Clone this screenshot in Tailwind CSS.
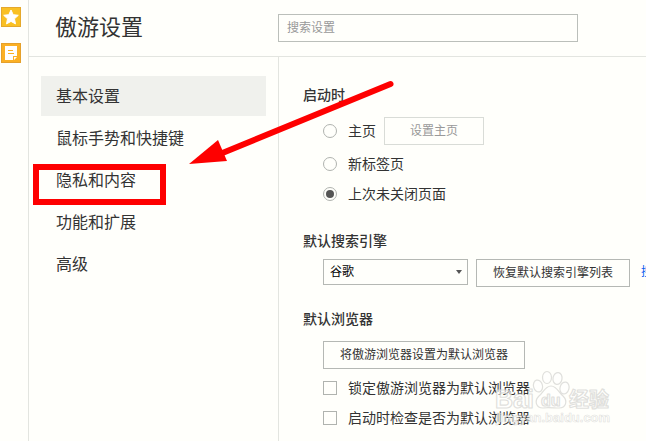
<!DOCTYPE html>
<html lang="zh-CN">
    <head>
        <meta charset="UTF-8" />
        <meta name="viewport" content="width=device-width, initial-scale=1.0" />
        <title>傲游设置</title>
        <script src="https://cdn.jsdelivr.net/npm/@tailwindcss/browser@4"></script>
    </head>
    <body class="relative flex min-h-screen overflow-hidden bg-[#fffffb] font-['Liberation_Sans','Noto_Sans_CJK_SC',sans-serif] text-sm text-[#333]">
        <!-- left toolbar -->
        <aside class="flex w-[29px] shrink-0 flex-col gap-4 border-r border-[#e3e5e0] pt-[7px] pl-px">
            <button aria-label="收藏" class="size-5">
                <svg viewBox="0 0 20 20" class="size-5">
                    <rect x=".5" y=".5" width="19" height="19" fill="#f9c023" stroke="#e5a82b" />
                    <path d="M10 3l2.200 4.700 5.100.6-3.800 3.500 1 5.100L10 14.400l-4.500 2.500 1-5.100-3.800-3.500 5.100-.6z" fill="#fff" stroke="#fff" stroke-linejoin="round" />
                </svg>
            </button>
            <button aria-label="记事本" class="size-5">
                <svg viewBox="0 0 20 20" class="size-5">
                    <rect x=".5" y=".5" width="19" height="19" fill="#fbb024" stroke="#e5a02b" />
                    <path d="M4 3h12v10h-4v4H4zM13 14h3l-3 3z" fill="#fff" />
                    <path d="M7 7.500h5M7 10.500h6" stroke="#fbb024" />
                </svg>
            </button>
        </aside>

        <div class="flex min-w-0 flex-1 flex-col">
            <!-- header -->
            <header class="flex h-[57px] items-center border-b border-[#e3e5e0]">
                <h1 class="w-[249px] shrink-0 pl-[26px] text-[22px] leading-7">傲游设置</h1>
                <input type="text" aria-label="搜索设置" placeholder="搜索设置" class="h-7 w-[300px] border border-[#bbbfba] px-2 text-xs placeholder:text-[#999]" />
            </header>

            <div class="flex flex-1">
                <!-- menu -->
                <nav class="flex w-[250px] shrink-0 flex-col gap-0.5 border-r border-[#e3e5e0] px-3 pt-[19px] text-base">
                    <a href="#" class="flex h-10 items-center bg-[#f0f1ed] pt-0.5 pl-[15px]">基本设置</a>
                    <a href="#" class="flex h-10 items-center pt-0.5 pl-[15px]">鼠标手势和快捷键</a>
                    <a href="#" class="flex h-10 items-center pt-0.5 pl-[15px]">隐私和内容</a>
                    <a href="#" class="flex h-10 items-center pt-0.5 pl-[15px]">功能和扩展</a>
                    <a href="#" class="flex h-10 items-center pt-0.5 pl-[15px]">高级</a>
                </nav>

                <!-- settings -->
                <main class="min-w-0 flex-1 overflow-hidden pt-7 pl-6 whitespace-nowrap">
                    <section>
                        <h2 class="leading-5 font-medium">启动时</h2>
                        <div class="mt-3 ml-5 flex h-7 items-center">
                            <input type="radio" name="startup" id="startup-home" class="size-3.5 appearance-none rounded-full border border-[#b0b3af]" />
                            <label for="startup-home" class="ml-[11px]">主页</label>
                            <button disabled class="ml-2 h-7 w-[100px] border border-[#d9dcd7] text-xs text-[#999]">设置主页</button>
                        </div>
                        <div class="mt-[9px] ml-5 flex h-5 items-center">
                            <input type="radio" name="startup" id="startup-new" class="size-3.5 appearance-none rounded-full border border-[#b0b3af]" />
                            <label for="startup-new" class="ml-[11px]">新标签页</label>
                        </div>
                        <div class="mt-2.5 ml-5 flex h-5 items-center">
                            <input type="radio" name="startup" id="startup-last" checked class="size-3.5 appearance-none rounded-full border border-[#b0b3af] checked:bg-[#555] checked:bg-clip-content checked:p-0.5" />
                            <label for="startup-last" class="ml-[11px]">上次未关闭页面</label>
                        </div>
                    </section>

                    <section class="mt-[27px]">
                        <h2 class="leading-5 font-medium">默认搜索引擎</h2>
                        <div class="mt-2 ml-5 flex h-7 items-start text-xs">
                            <div class="relative w-[145px] shrink-0">
                                <select aria-label="默认搜索引擎" class="h-[26px] w-full appearance-none border border-[#b5b8b4] pl-1.5 text-black">
                                    <option>谷歌</option>
                                </select>
                                <svg viewBox="0 0 6 4" class="pointer-events-none absolute top-[11px] right-[6px] h-1 w-1.5"><path d="M0 0h6L3 4z" fill="#555" /></svg>
                            </div>
                            <button class="ml-2 h-7 w-[154px] shrink-0 border border-[#b5b8b4]">恢复默认搜索引擎列表</button>
                            <a href="#" class="ml-[11px] leading-[26px] text-[#0a5cf0]">搜索引擎管理</a>
                        </div>
                    </section>

                    <section class="mt-[22px]">
                        <h2 class="leading-5 font-medium">默认浏览器</h2>
                        <button class="mt-3 ml-5 block h-7 w-[202px] border border-[#b5b8b4] text-xs">将傲游浏览器设置为默认浏览器</button>
                        <div class="mt-[9px] ml-5 flex h-5 items-center">
                            <input type="checkbox" id="lock-default" class="size-3.5 appearance-none border border-[#b0b3af]" />
                            <label for="lock-default" class="ml-[11px]">锁定傲游浏览器为默认浏览器</label>
                        </div>
                        <div class="mt-2.5 ml-5 flex h-5 items-center">
                            <input type="checkbox" id="check-default" class="size-3.5 appearance-none border border-[#b0b3af]" />
                            <label for="check-default" class="ml-[11px]">启动时检查是否为默认浏览器</label>
                        </div>
                    </section>
                </main>
            </div>
        </div>

        <!-- highlight box -->
        <div class="pointer-events-none absolute top-[164px] left-[33px] h-[41px] w-[133px] border-6 border-[#fe0000]"></div>
        <!-- arrow -->
        <svg viewBox="0 0 210 90" class="pointer-events-none absolute top-[78px] left-[186px] h-[90px] w-[210px]">
            <path d="M34 76L204.500 6" stroke="#fe0000" stroke-width="6" stroke-linecap="round" />
            <path d="M3 86L32 62 41 83z" fill="#fe0000" />
        </svg>
        <!-- watermark -->
        <svg viewBox="0 0 120 60" class="pointer-events-none absolute top-[368px] left-[493px] h-[60px] w-[120px]">
            <g fill="#fff" fill-opacity=".5" stroke="#d8d8d5" stroke-opacity=".8" stroke-width="1.200" stroke-linejoin="round">
                <ellipse cx="45" cy="18" rx="4.500" ry="6" transform="rotate(-15 45 18)" />
                <ellipse cx="54" cy="9.500" rx="4.500" ry="6" />
                <ellipse cx="64.500" cy="10.500" rx="4.500" ry="6" transform="rotate(10 64.500 10.500)" />
                <ellipse cx="71.500" cy="20" rx="4.500" ry="6" transform="rotate(15 71.500 20)" />
                <path d="M58 18c6 0 8 7 12 10 5 5 3 12-4 12-5 0-11-1-16 0-7 0-9-7-4-12 4-3 6-10 12-10z" />
                <text x="2" y="40" font-family="Liberation Sans" font-weight="700" font-size="25">Bai</text>
                <text x="48" y="38" font-family="Liberation Sans" font-weight="700" font-size="16">du</text>
                <text x="76" y="39" font-family="Noto Sans CJK SC" font-weight="700" font-size="20">经验</text>
                <text x="3" y="54" font-family="Liberation Sans" font-weight="700" font-size="13" stroke-width=".6">jingyan.baidu.com</text>
            </g>
        </svg>
    </body>
</html>
